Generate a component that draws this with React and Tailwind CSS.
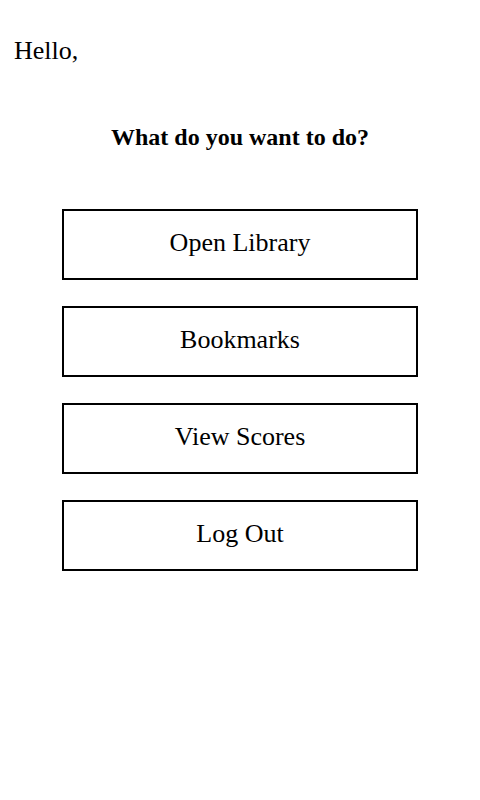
export default function App() {
  const items = ["Open Library", "Bookmarks", "View Scores", "Log Out"];
  return (
    <div className="w-[480px] h-[800px] bg-white text-black" style={{ fontFamily: '"Liberation Serif", serif' }}>
      <div className="pt-[36px] pl-[14px] text-[26px] leading-[30px]">Hello,</div>
      <div className="mt-[56px] text-center text-[24px] leading-[30px] font-bold">What do you want to do?</div>
      <div className="mt-[57px] flex flex-col items-center gap-[26px]">
        {items.map((t) => (
          <button key={t} className="w-[356px] h-[71px] border-2 border-black flex items-center justify-center text-[26px] leading-[30px] pb-[4px] bg-white">
            {t}
          </button>
        ))}
      </div>
    </div>
  );
}
